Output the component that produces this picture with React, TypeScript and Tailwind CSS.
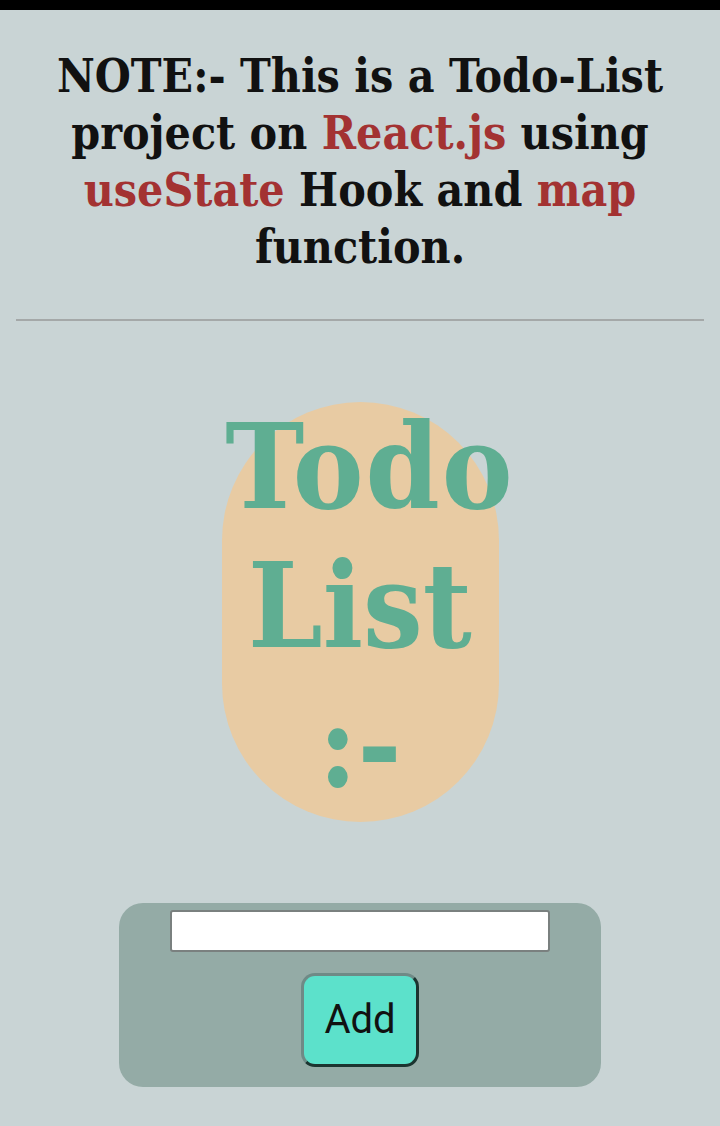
import React, { useState } from 'react';

export default function App() {
  const [text, setText] = useState('');
  const [items, setItems] = useState<string[]>([]);

  const addItem = () => {
    if (!text.trim()) return;
    setItems([...items, text]);
    setText('');
  };

  return (
    <div className="min-h-[1126px] bg-[#c9d4d5] flex flex-col items-center">
      <div className="w-full h-[10px] bg-black" />

      <p className="mt-[38px] w-full text-center font-['DejaVu_Serif',serif] font-stretch-condensed font-bold text-[46px] leading-[57px] text-[#111]">
        NOTE:- This is a Todo-List
        <br />
        project on <span className="text-[#a33232]">React.js</span> using
        <br />
        <span className="text-[#a33232]">useState</span> Hook and{' '}
        <span className="text-[#a33232]">map</span>
        <br />
        function.
      </p>

      <hr className="mt-[43px] w-[688px] border-t-2 border-[#a4a8a8]" />

      <div className="mt-[81px] w-[277px] h-[420px] rounded-full bg-[#e8cba3] flex flex-col items-center">
        <h1 className="-mt-[5px] w-[400px] text-center font-['DejaVu_Serif',serif] font-stretch-condensed font-bold text-[118px] leading-[139px] text-[#5fae92]">
          <span className="pl-[20px] tracking-[2px]">Todo</span>
          <br />
          List
          <br />
          :-
        </h1>
      </div>

      <div className="mt-[81px] w-[482px] h-[184px] rounded-[24px] bg-[#94aba6] flex flex-col items-center pt-[7px]">
        <input
          value={text}
          onChange={(e) => setText(e.target.value)}
          className="w-[380px] h-[42px] bg-white border-2 border-[#7a807f] rounded-[3px] px-2 text-lg outline-none"
        />
        <button
          onClick={addItem}
          className="mt-[21px] w-[118px] h-[94px] rounded-[14px] bg-[#5ce1cb] border-[3px] border-t-[#6f8a86] border-l-[#6f8a86] border-r-[#1c3430] border-b-[#1c3430] font-['Roboto',sans-serif] text-[40px] text-[#111]"
        >
          Add
        </button>
        {items.map((item, i) => (
          <div key={i} className="text-black">{item}</div>
        ))}
      </div>
    </div>
  );
}
